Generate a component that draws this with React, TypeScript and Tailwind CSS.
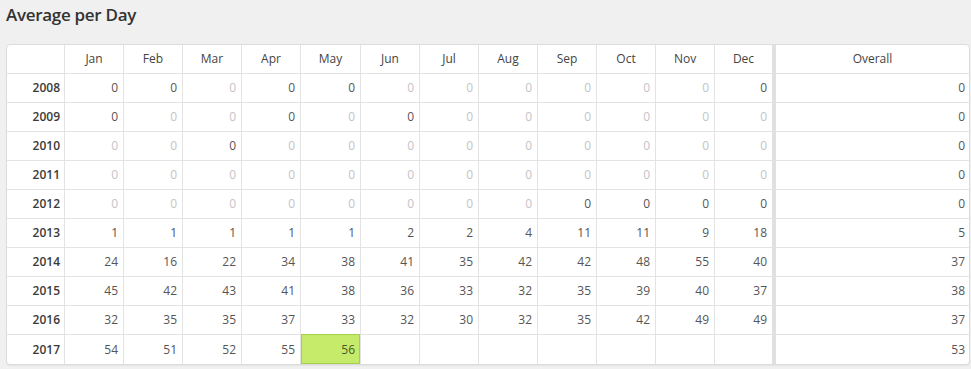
import React from "react";

type Cell = { v: string; faint?: boolean; hl?: boolean };

const months = ["Jan", "Feb", "Mar", "Apr", "May", "Jun", "Jul", "Aug", "Sep", "Oct", "Nov", "Dec"];

const d = (v: string): Cell => ({ v });
const f = (): Cell => ({ v: "0", faint: true });
const e = (): Cell => ({ v: "" });

const rows: { year: string; cells: Cell[]; overall: string }[] = [
  { year: "2008", cells: [d("0"), d("0"), f(), d("0"), d("0"), f(), f(), f(), f(), f(), f(), d("0")], overall: "0" },
  { year: "2009", cells: [d("0"), f(), f(), d("0"), f(), d("0"), f(), f(), f(), f(), f(), f()], overall: "0" },
  { year: "2010", cells: [f(), f(), d("0"), f(), f(), f(), f(), f(), f(), f(), f(), f()], overall: "0" },
  { year: "2011", cells: [f(), f(), f(), f(), f(), f(), f(), f(), f(), f(), f(), f()], overall: "0" },
  { year: "2012", cells: [f(), f(), f(), f(), f(), f(), f(), f(), d("0"), d("0"), d("0"), d("0")], overall: "0" },
  { year: "2013", cells: ["1", "1", "1", "1", "1", "2", "2", "4", "11", "11", "9", "18"].map(d), overall: "5" },
  { year: "2014", cells: ["24", "16", "22", "34", "38", "41", "35", "42", "42", "48", "55", "40"].map(d), overall: "37" },
  { year: "2015", cells: ["45", "42", "43", "41", "38", "36", "33", "32", "35", "39", "40", "37"].map(d), overall: "38" },
  { year: "2016", cells: ["32", "35", "35", "37", "33", "32", "30", "32", "35", "42", "49", "49"].map(d), overall: "37" },
  {
    year: "2017",
    cells: [d("54"), d("51"), d("52"), d("55"), { v: "56", hl: true }, e(), e(), e(), e(), e(), e(), e()],
    overall: "53",
  },
];

export default function App() {
  return (
    <div
      className="w-[971px] h-[369px] bg-[#f0f0f0] overflow-hidden"
      style={{ fontFamily: '"Open Sans", "Noto Sans", sans-serif' }}
    >
      <h1 className="pl-[6px] pt-[2px] h-[44px] text-[17px] font-semibold text-[#333] leading-[26px] tracking-[-0.3px]">
        Average per Day
      </h1>
      <div className="ml-[6px] w-[964px] bg-white border border-[#dcdcdc] rounded-[4px] overflow-hidden shadow-[0_1px_1px_rgba(0,0,0,0.05)]">
        <div className="grid grid-cols-[58px_repeat(4,59px)_60px_repeat(6,59px)_61px_1fr] text-[12px]">
          {/* header */}
          <div className="h-[29px] border-r border-b border-[#e3e3e3]" />
          {months.map((m, i) => (
            <div
              key={m}
              className={
                i === 11
                  ? "h-[29px] flex items-center justify-center text-[#444] border-b border-[#e3e3e3] border-r-4 border-r-[#e0e0e0]"
                  : "h-[29px] flex items-center justify-center text-[#444] border-r border-b border-[#e3e3e3]"
              }
            >
              {m}
            </div>
          ))}
          <div className="h-[29px] flex items-center justify-center text-[#444] border-b border-[#e3e3e3]">Overall</div>

          {rows.map((r, ri) => {
            const last = ri === rows.length - 1;
            const bb = last ? "" : " border-b";
            return (
              <React.Fragment key={r.year}>
                <div
                  className={
                    "h-[29px] flex items-center justify-end pr-[4px] font-semibold text-[#3a3a3a] border-r border-[#e3e3e3]" + bb
                  }
                >
                  {r.year}
                </div>
                {r.cells.map((c, ci) => {
                  let cls = "h-[29px] flex items-center justify-end pr-[5px] border-[#e3e3e3]" + bb;
                  cls += ci === 11 ? " border-r-4 border-r-[#e0e0e0]" : " border-r";
                  cls += c.faint ? " text-[#c4c4c4]" : " text-[#555]";
                  if (c.hl) {
                    return (
                      <div key={ci} className={cls + " relative"}>
                        <div className="absolute inset-x-0 top-[-1px] bottom-0 bg-[#c6eb6a] border border-[#a3d04a]" />
                        <span className="relative text-[#4a5a2a]">{c.v}</span>
                      </div>
                    );
                  }
                  return (
                    <div key={ci} className={cls}>
                      {c.v}
                    </div>
                  );
                })}
                <div className={"h-[29px] flex items-center justify-end pr-[4px] text-[#555] border-[#e3e3e3]" + bb}>
                  {r.overall}
                </div>
              </React.Fragment>
            );
          })}
        </div>
      </div>
    </div>
  );
}
